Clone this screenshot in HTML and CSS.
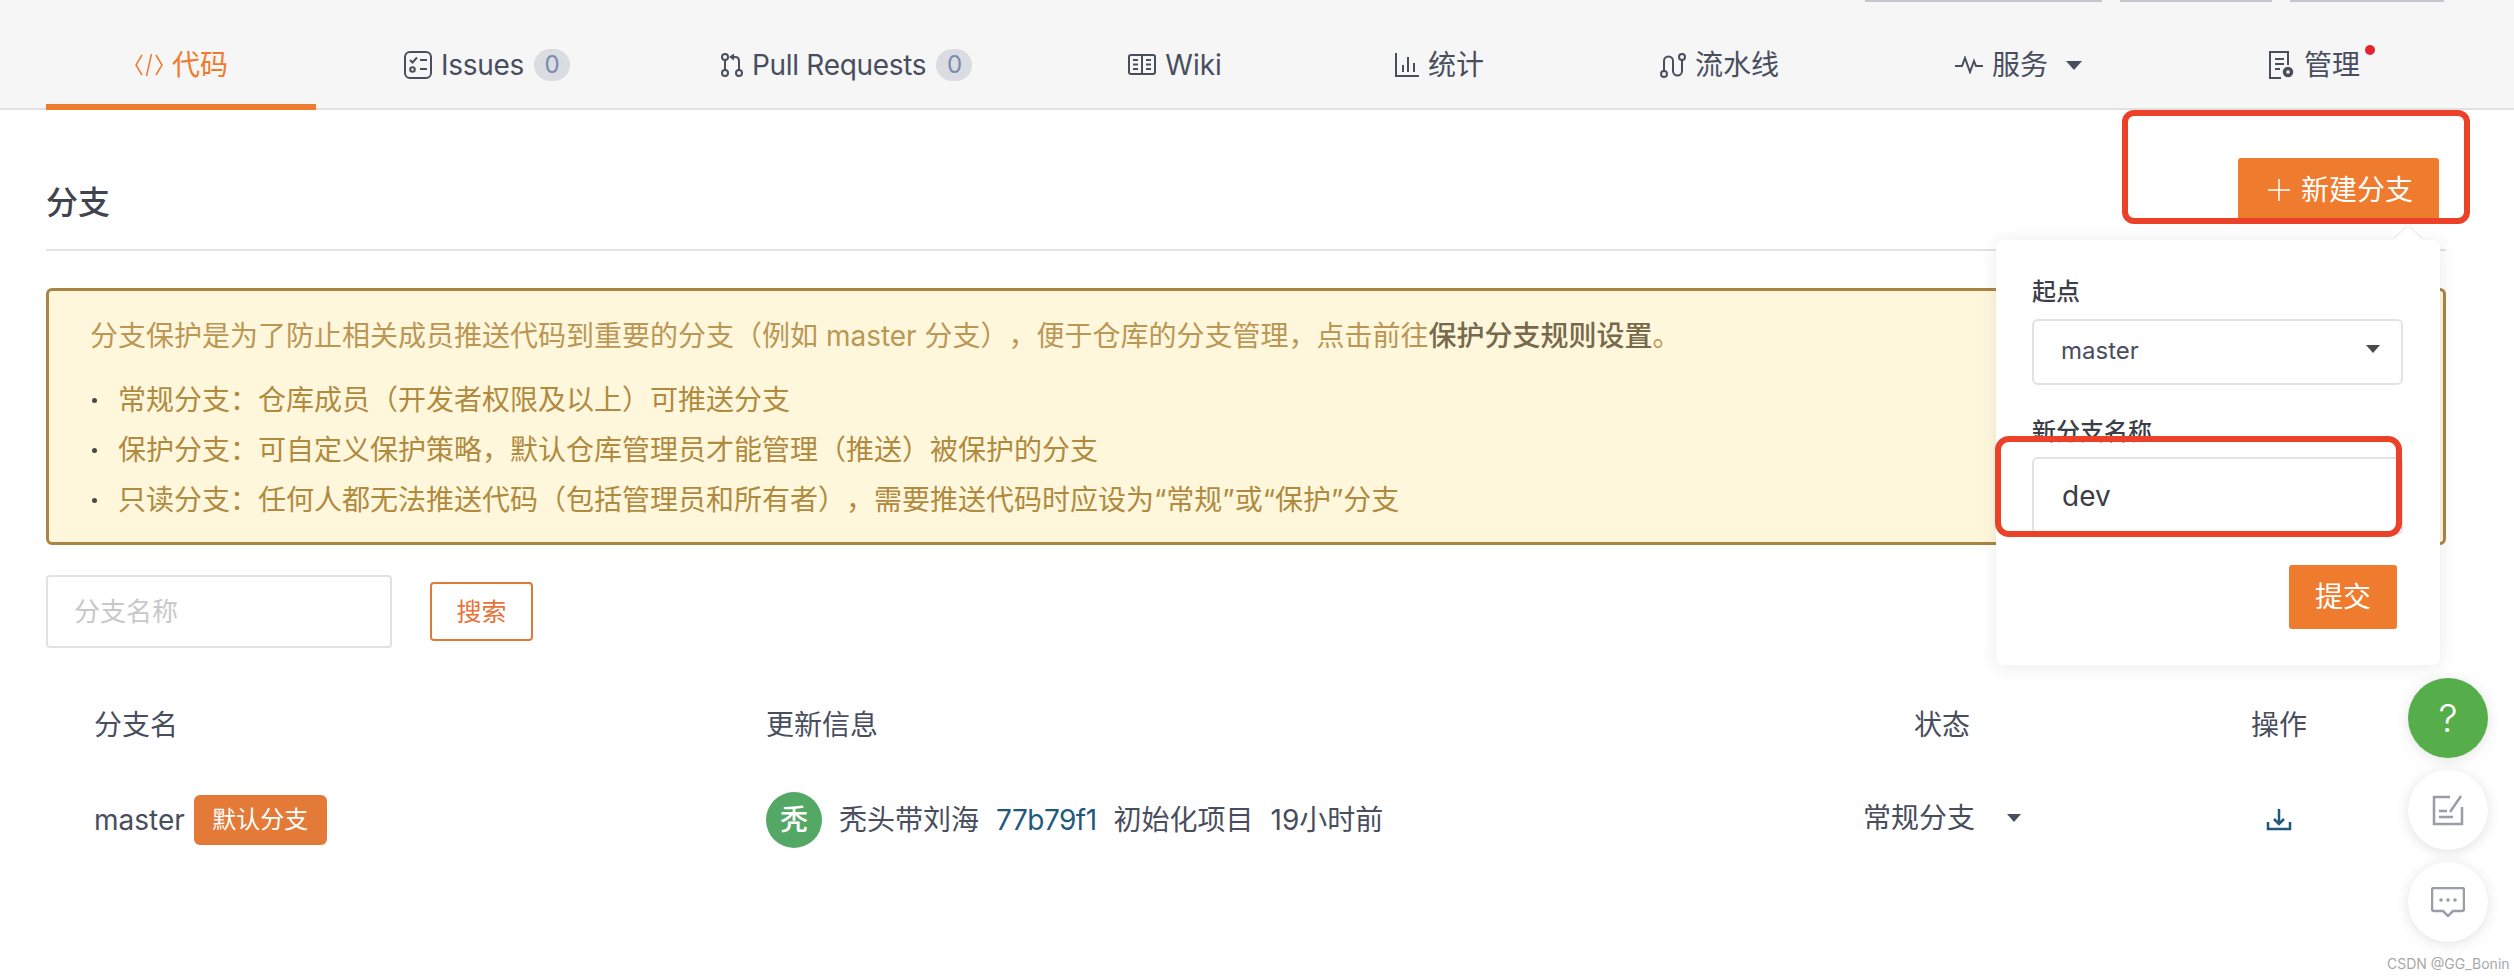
FILE: index.html
```html
<!DOCTYPE html>
<html lang="zh-CN">
<head>
  <meta charset="UTF-8">
  <title>分支</title>
  <link rel="stylesheet" href="styles.css">
</head>
<body>
  <nav class="project-nav">
    <div class="top-edge">
      <span class="edge-btn edge-watch"></span>
      <span class="edge-btn edge-star"></span>
      <span class="edge-btn edge-fork"></span>
    </div>
    <div class="tabs">
      <a class="tab active">
        <svg class="icon" width="30" height="24" viewBox="0 0 30 24"><path d="M8 2 2 12l6 10M22 2l6 10-6 10M17.500 1l-5 22"/></svg>
        <span>代码</span>
      </a>
      <a class="tab has-count tab-issues">
        <svg class="icon" width="28" height="28" viewBox="0 0 28 28"><rect x="1" y="1" width="26" height="26" rx="5"/><path d="m6 9 2.500 2.500L13 6.500M16 9h7M16 18h7"/><circle cx="8.500" cy="18.500" r="2.300"/></svg>
        <span>Issues</span>
        <span class="count">0</span>
      </a>
      <a class="tab has-count tab-pulls">
        <svg class="icon" width="22" height="24" viewBox="0 0 22 24"><circle cx="4" cy="4" r="3"/><circle cx="4" cy="20" r="3"/><circle cx="18" cy="20" r="3"/><path d="M4 7v10M18 17V8q0-4-4-4h-2"/><path class="solid" d="M8 4l5-3.500v7z"/></svg>
        <span>Pull Requests</span>
        <span class="count">0</span>
      </a>
      <a class="tab tab-wiki">
        <svg class="icon" width="28" height="22" viewBox="0 0 28 22"><rect x="1" y="1" width="26" height="19" rx="2"/><path d="M14 1v19M5 6h5M5 10.500h5M5 15h5M18 6h5M18 10.500h5M18 15h5"/></svg>
        <span>Wiki</span>
      </a>
      <a class="tab">
        <svg class="icon" width="24" height="24" viewBox="0 0 24 24"><path d="M1 0v23h23M8 12v7M13 4v15M19 10v9"/></svg>
        <span>统计</span>
      </a>
      <a class="tab">
        <svg class="icon" width="26" height="25" viewBox="0 0 26 25"><circle cx="4" cy="21" r="3"/><circle cx="22" cy="4" r="3"/><path d="M4 18V8a4.500 4.500 0 0 1 9 0v10a4.500 4.500 0 0 0 9 0V7"/></svg>
        <span>流水线</span>
      </a>
      <a class="tab tab-services">
        <svg class="icon" width="28" height="18" viewBox="0 0 28 18"><path d="M0 10h7l3-8 5 14 4-11 2 5h7"/></svg>
        <span>服务</span>
        <i class="caret nav-caret"></i>
      </a>
      <a class="tab tab-manage">
        <svg class="icon" width="26" height="28" viewBox="0 0 26 28"><path d="M12 27H1V1h18v13M6 8h9M6 13h9M6 18h5"/><circle cx="19" cy="21" r="3.500" stroke-width="3.500"/></svg>
        <span>管理</span>
        <i class="notice-dot"></i>
      </a>
    </div>
  </nav>

  <main class="page">
    <header class="section-head">
      <h2>分支</h2>
      <button class="btn btn-new">
        <svg class="plus" width="22" height="22" viewBox="0 0 22 22"><path d="M11 0v22M0 11h22"/></svg>
        新建分支
      </button>
    </header>

    <section class="notice">
      <p>分支保护是为了防止相关成员推送代码到重要的分支（例如 master 分支），便于仓库的分支管理，点击前往<b>保护分支规则设置</b>。</p>
      <ul>
        <li>常规分支：仓库成员（开发者权限及以上）可推送分支</li>
        <li>保护分支：可自定义保护策略，默认仓库管理员才能管理（推送）被保护的分支</li>
        <li>只读分支：任何人都无法推送代码（包括管理员和所有者），需要推送代码时应设为“常规”或“保护”分支</li>
      </ul>
    </section>

    <form class="search-row">
      <input class="search-input" type="text" placeholder="分支名称">
      <button class="btn-search" type="button">搜索</button>
    </form>

    <div class="branch-table">
      <div>分支名</div>
      <div>更新信息</div>
      <div class="cell-center">状态</div>
      <div class="cell-center cell-ops">操作</div>

      <div class="cell-name">master <span class="default-tag">默认分支</span></div>
      <div class="cell-update">
        <span class="avatar">秃</span>
        <span>秃头带刘海</span>
        <a class="sha">77b79f1</a>
        <span>初始化项目</span>
        <span>19小时前</span>
      </div>
      <div class="cell-center cell-state">常规分支 <i class="caret state-caret"></i></div>
      <div class="cell-center cell-ops">
        <svg class="download" width="26" height="22" viewBox="0 0 26 22"><path d="M13 0v14M8 10l5 5 5-5M2 13v7h22v-7"/></svg>
      </div>
    </div>
  </main>

  <!-- new branch popover -->
  <div class="popover">
    <label>起点</label>
    <div class="select"><span>master</span><i class="caret select-caret"></i></div>
    <label class="label-name">新分支名称</label>
    <input class="name-input" type="text" value="dev">
    <div class="popover-foot"><button class="btn btn-submit">提交</button></div>
  </div>

  <!-- red marks drawn over the screenshot -->
  <div class="mark mark-new"></div>
  <div class="mark mark-input"></div>

  <div class="fabs">
    <div class="fab fab-help">?</div>
    <div class="fab">
      <svg width="32" height="32" viewBox="0 0 32 32"><path d="M18 3H2v27h28V13M7 17h8M7 23h14M18 18 29 2"/></svg>
    </div>
    <div class="fab">
      <svg width="34" height="30" viewBox="0 0 34 30"><path d="M3 1h28q2 0 2 2v19q0 2-2 2h-9l-5 5-5-5H3q-2 0-2-2V3q0-2 2-2z"/><circle class="dot" cx="10" cy="13" r="1.800"/><circle class="dot" cx="17" cy="13" r="1.800"/><circle class="dot" cx="24" cy="13" r="1.800"/></svg>
    </div>
  </div>

  <div class="watermark">CSDN @GG_Bonin</div>
</body>
</html>
```

FILE: styles.css
```css
* { box-sizing: border-box; }
html, body { height: 100%; }
body {
  margin: 0;
  position: relative;
  overflow: hidden;
  background: #fff;
  color: #484e5e;
  font-family: Inter, "Noto Sans CJK SC", sans-serif;
  font-size: 28px;
  line-height: 40px;
  text-spacing-trim: space-all;
}

/* nav */
.project-nav { background: #f6f6f7; }
.top-edge { display: flex; height: 2px; padding-left: 1865px; gap: 18px; }
.edge-btn { background: #c6c7ce; }
.edge-watch { width: 237px; }
.edge-star { width: 152px; }
.edge-fork { width: 154px; }
.tabs {
  display: flex;
  height: 108px;
  padding-left: 46px;
  border-bottom: 2px solid #e0e0e0;
}
.tab {
  display: flex;
  align-items: center;
  gap: 9px;
  height: 108px;
  padding: 24px 88px 0;
  border-bottom: 6px solid transparent;
  white-space: nowrap;
}
.tab.active { color: #ef7b2e; border-bottom-color: #ef7b2e; gap: 8px; }
.tab.has-count { letter-spacing: -0.3px; }
.tab.tab-issues { padding-right: 63px; }
.tab.tab-pulls { padding-right: 68px; }
.tab.tab-wiki { padding-right: 85px; }
.tab-services { gap: 9px; padding-right: 99px; }
.tab-manage { position: relative; }
.icon { fill: none; stroke: currentColor; stroke-width: 2; }
.tab.active .icon { stroke-width: 1.500; }
.icon .solid { fill: currentColor; stroke: none; }
.count {
  width: 36px;
  height: 32px;
  border-radius: 16px;
  background: #d9dde2;
  color: #7a8aae;
  font-size: 24px;
  line-height: 32px;
  text-align: center;
  margin-left: 1px;
}
.caret {
  display: inline-block;
  width: 0;
  height: 0;
  border-left: 8px solid transparent;
  border-right: 8px solid transparent;
  border-top: 9px solid #484e5e;
}
.nav-caret { margin-left: 9px; }
.notice-dot {
  position: absolute;
  left: 184px;
  top: 43px;
  width: 10px;
  height: 10px;
  border-radius: 50%;
  background: #e4252f;
}

/* main column */
.page { padding: 0 68px 0 46px; }
.section-head {
  display: flex;
  justify-content: space-between;
  align-items: flex-start;
  padding: 48px 7px 24px 0;
  border-bottom: 2px solid #e2e2e4;
}
.section-head h2 {
  margin: 23px 0 0;
  font-size: 32px;
  line-height: 44px;
  font-weight: 500;
  color: #40444f;
}
.btn {
  border: none;
  border-radius: 3px;
  background: #ef7b2e;
  color: #fff;
  font: inherit;
}
.btn-new {
  display: flex;
  align-items: center;
  gap: 11px;
  width: 201px;
  height: 64px;
  padding: 0 0 0 30px;
}
.plus { fill: none; stroke: #fff; stroke-width: 1.500; }

.notice {
  margin-top: 37px;
  height: 257px;
  padding: 25px 40px 17px 41px;
  background: #fef7dc;
  border: 3px solid #a98543;
  border-radius: 6px;
  color: #b08a3f;
}
.notice p { margin: 0 0 19px; color: #bb9654; }
.notice b { font-weight: 500; color: #77694c; }
.notice ul { margin: 0; padding: 0; list-style: none; }
.notice li { position: relative; height: 50px; line-height: 50px; padding-left: 28px; }
.notice li::before {
  content: "";
  position: absolute;
  left: 2px;
  top: 23px;
  width: 5px;
  height: 5px;
  border-radius: 50%;
  background: #4a4a44;
}

.search-row { display: flex; align-items: flex-start; gap: 38px; margin-top: 30px; }
.search-input {
  width: 346px;
  height: 73px;
  padding: 0 26px;
  border: 2px solid #e2e2e5;
  border-radius: 4px;
  font: inherit;
  font-size: 26px;
  outline: none;
}
.search-input::placeholder { color: #c8c8c8; }
.btn-search {
  width: 103px;
  height: 59px;
  margin-top: 7px;
  border: 2px solid #e07a3a;
  border-radius: 4px;
  background: #fff;
  color: #e8733a;
  font: inherit;
  font-size: 25px;
}

.branch-table {
  display: grid;
  grid-template-columns: 672px 1076px 200px 404px;
  row-gap: 47px;
  align-items: center;
  margin-top: 57px;
  padding-left: 48px;
}
.cell-center { text-align: center; }
.cell-ops { padding-left: 70px; }
.cell-name { display: flex; align-items: center; gap: 9px; }
.default-tag {
  width: 133px;
  height: 50px;
  border-radius: 6px;
  background: #e37a38;
  color: #fff;
  font-size: 24px;
  line-height: 50px;
  text-align: center;
}
.cell-update { display: flex; align-items: center; gap: 17px; height: 56px; }
.avatar {
  width: 56px;
  height: 56px;
  margin-right: 0;
  border-radius: 50%;
  background: #54a865;
  color: #fff;
  font-weight: 500;
  line-height: 56px;
  text-align: center;
}
.sha { color: #1f5a7e; letter-spacing: -0.5px; }
.cell-state { display: flex; align-items: center; justify-content: center; gap: 32px; margin-top: -4px; }
.state-caret { border-left-width: 7px; border-right-width: 7px; border-top-width: 8px; }
.download { display: block; margin: 0 auto; fill: none; stroke: #1f5a7e; stroke-width: 2.500; }

/* popover */
.popover {
  position: absolute;
  left: 1996px;
  top: 240px;
  width: 444px;
  height: 425px;
  padding: 36px 37px 36px 36px;
  background: #fff;
  border-radius: 8px;
  box-shadow: 0 2px 18px rgba(60, 60, 80, 0.1);
  font-size: 24px;
}
.popover::before {
  content: "";
  position: absolute;
  right: 22px;
  top: -10px;
  width: 20px;
  height: 20px;
  background: #fff;
  transform: rotate(45deg);
  box-shadow: -1px -1px 2px rgba(60, 60, 80, 0.1);
}
.popover label { display: block; font-weight: 500; line-height: 32px; color: #3c3f48; }
.popover .label-name { margin-top: 31px; }
.select {
  position: relative;
  height: 66px;
  margin-top: 11px;
  padding-left: 27px;
  border: 2px solid #e2e2e5;
  border-radius: 6px;
  line-height: 60px;
}
.select-caret { position: absolute; right: 21px; top: 24px; border-left-width: 7px; border-right-width: 7px; border-top-width: 8px; border-top-color: #4a4a4a; }
.name-input {
  display: block;
  width: 100%;
  height: 78px;
  margin-top: 9px;
  padding: 0 28px;
  border: 2px solid #e2e2e5;
  border-radius: 6px;
  color: #3a3d46;
  font: inherit;
  font-size: 28px;
  outline: none;
}
.popover-foot { display: flex; justify-content: flex-end; margin-top: 30px; padding-right: 6px; }
.btn-submit { width: 108px; height: 64px; font-size: 28px; }

/* annotations */
.mark { position: absolute; border: 6px solid #ea4128; }
.mark-new { left: 2122px; top: 110px; width: 348px; height: 114px; border-radius: 12px; }
.mark-input { left: 1995px; top: 436px; width: 407px; height: 101px; border-radius: 14px; }

/* floating buttons */
.fabs {
  position: absolute;
  left: 2408px;
  top: 678px;
  display: flex;
  flex-direction: column;
  gap: 12px;
}
.fab {
  display: flex;
  align-items: center;
  justify-content: center;
  width: 80px;
  height: 80px;
  border-radius: 50%;
  background: #fff;
  box-shadow: 0 2px 14px rgba(0, 0, 0, 0.12);
}
.fab svg { fill: none; stroke: #9a9ca8; stroke-width: 2.500; }
.fab svg .dot { fill: #9a9ca8; stroke: none; }
.fab-help { background: #56ae4a; color: #fff; font-size: 38px; font-weight: 300; }

.watermark {
  position: absolute;
  left: 2387px;
  top: 954px;
  color: #a8a8a8;
  font-size: 14px;
  line-height: 20px;
}
```
